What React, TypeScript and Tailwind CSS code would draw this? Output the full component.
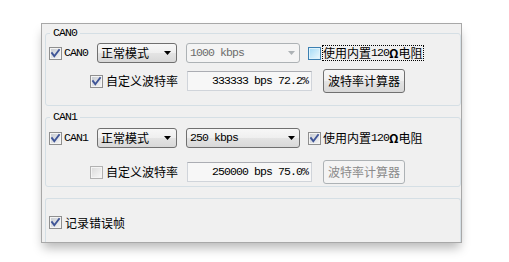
import React from 'react';

const zh = "font-['Noto_Sans_CJK_SC',sans-serif] text-[12px] leading-[14px]";
const mono = "font-['Liberation_Mono',monospace] text-[11.5px] leading-[14px] tracking-[-0.9px]";
const legendCls = "font-['Liberation_Mono',monospace] text-[11.5px] leading-[12px] tracking-[-0.9px] text-black";

type BoxVariant = 'normal' | 'hot' | 'disabled';

const boxColors: Record<BoxVariant, { edge: string; frame: string; from: string; to: string }> = {
    normal: { edge: '#8f8f8f', frame: '#f4f4f4', from: '#c9cdd3', to: '#f3f3f3' },
    hot: { edge: '#3c7fb1', frame: '#dff3fc', from: '#a9dcf6', to: '#e8f7fd' },
    disabled: { edge: '#b1b1b1', frame: '#f4f4f4', from: '#dcdcdc', to: '#f6f6f6' },
};

const CheckBox: React.FC<{ checked?: boolean; variant?: BoxVariant }> = ({ checked = false, variant = 'normal' }) => {
    const c = boxColors[variant];
    const gid = `cb-${variant}`;
    return (
        <svg width="13" height="13" viewBox="0 0 13 13" className="shrink-0">
            <defs>
                <linearGradient id={gid} x1="0" y1="0" x2="1" y2="1">
                    <stop offset="0" stopColor={c.from} />
                    <stop offset="1" stopColor={c.to} />
                </linearGradient>
            </defs>
            <rect x="0.5" y="0.5" width="12" height="12" fill={c.frame} stroke={c.edge} shapeRendering="crispEdges" />
            <rect x="2" y="2" width="9" height="9" fill={`url(#${gid})`} shapeRendering="crispEdges" />
            {checked && (
                <path d="M3 6.2 L5.3 9.2 L10 3" fill="none" stroke="#3f5597" strokeWidth={1.9} strokeLinecap="square" />
            )}
        </svg>
    );
};

const Arrow: React.FC<{ color: string }> = ({ color }) => (
    <svg width="7" height="4" viewBox="0 0 7 4" className="shrink-0">
        <path d="M0 0 H7 L3.5 4 Z" fill={color} />
    </svg>
);

const ModeCombo: React.FC = () => (
    <div className="flex h-[20px] w-[80px] shrink-0 items-center justify-between rounded-[3px] border border-[#707070] bg-[linear-gradient(to_bottom,#f7f7f7_0%,#efefef_50%,#e4e4e4_50%,#d8d8d8_100%)] pl-[3px] pr-[5px] text-black">
        <span className={zh}>正常模式</span>
        <Arrow color="#000" />
    </div>
);

const SpeedCombo: React.FC<{ value: string; disabled?: boolean }> = ({ value, disabled }) => (
    <div
        className={`ml-[9px] flex h-[20px] w-[114px] shrink-0 items-center justify-between rounded-[3px] border pl-[3px] pr-[4px] ${
            disabled
                ? 'border-[#adb2b5] bg-[#f4f4f4] text-[#6d6d6d]'
                : 'border-[#707070] bg-[linear-gradient(to_bottom,#f7f7f7_0%,#efefef_50%,#e4e4e4_50%,#d8d8d8_100%)] text-black'
        }`}
    >
        <span className={mono}>{value}</span>
        <Arrow color={disabled ? '#adb2b5' : '#000'} />
    </div>
);

interface CanConfig {
    name: string;
    speed: string;
    speedDisabled: boolean;
    resistorChecked: boolean;
    resistorFocused: boolean;
    custom: boolean;
    rate: string;
}

const channels: CanConfig[] = [
    { name: 'CAN0', speed: '1000 kbps', speedDisabled: true, resistorChecked: false, resistorFocused: true, custom: true, rate: '333333 bps 72.2%' },
    { name: 'CAN1', speed: '250 kbps', speedDisabled: false, resistorChecked: true, resistorFocused: false, custom: false, rate: '250000 bps 75.0%' },
];

const CanGroup: React.FC<{ cfg: CanConfig; first: boolean }> = ({ cfg, first }) => (
    <fieldset
        className={`ml-[3px] w-[416px] rounded-[3px] border border-[#d5dfe5] ${first ? 'mt-[3px] pb-[12px]' : 'mt-[5px] pb-[2px]'}`}
    >
        <legend className={`ml-[4px] px-[3px] ${legendCls}`}>{cfg.name}</legend>

        <div className={`flex h-[20px] items-center pl-[3px] ${first ? 'mt-[4px]' : 'mt-[5px]'}`}>
            <CheckBox checked />
            <span className={`ml-[2px] w-[33px] text-black ${mono}`}>{cfg.name}</span>
            <ModeCombo />
            <SpeedCombo value={cfg.speed} disabled={cfg.speedDisabled} />
            <div className="ml-[8px]">
                <CheckBox checked={cfg.resistorChecked} variant={cfg.resistorFocused ? 'hot' : 'normal'} />
            </div>
            <span
                className={`ml-[1px] flex items-center border border-dotted text-black ${
                    cfg.resistorFocused ? 'border-black' : 'border-transparent'
                }`}
            >
                <span className={zh}>使用内置</span>
                <span className={mono}>120</span>
                <span className={`${zh} font-bold`}>Ω</span>
                <span className={zh}>电阻</span>
            </span>
        </div>

        <div className={`flex h-[24px] items-center pl-[44px] ${first ? 'mt-[6px]' : 'mt-[12px]'}`}>
            <CheckBox checked={cfg.custom} variant={cfg.custom ? 'normal' : 'disabled'} />
            <span className={`ml-[3px] w-[81px] text-black ${zh}`}>自定义波特率</span>
            <div className="flex h-[20px] w-[125px] shrink-0 items-center justify-end border border-[#d0d4da] border-t-[#abadb3] bg-[#f7f7f7] pr-[3px]">
                <span className={`text-black ${mono}`}>{cfg.rate}</span>
            </div>
            <button
                type="button"
                className={`ml-[11px] flex h-[24px] w-[82px] shrink-0 items-center justify-center rounded-[3px] border ${
                    cfg.custom
                        ? 'border-[#707070] bg-[linear-gradient(to_bottom,#f7f7f7_0%,#efefef_50%,#e4e4e4_50%,#d8d8d8_100%)] text-black'
                        : 'border-[#adb2b5] bg-[#f4f4f4] text-[#8a8a8a]'
                }`}
            >
                <span className={zh}>波特率计算器</span>
            </button>
        </div>
    </fieldset>
);

export default function App() {
    return (
        <div className="h-[262px] w-[509px] overflow-hidden bg-white pl-[41px] pt-[23px]">
            <div className="h-[220px] w-[421px] overflow-hidden border border-[#a8a8a8] bg-[#f0f0f0] shadow-[0_7px_10px_-2px_rgba(0,0,0,0.28)]">
                {channels.map((cfg, i) => (
                    <CanGroup key={cfg.name} cfg={cfg} first={i === 0} />
                ))}

                <div className="ml-[3px] mt-[11px] h-[60px] w-[416px] rounded-t-[3px] border border-b-0 border-[#d5dfe5] pl-[3px] pt-[17px]">
                    <div className="flex h-[13px] items-center">
                        <CheckBox checked />
                        <span className={`ml-[3px] text-black ${zh}`}>记录错误帧</span>
                    </div>
                </div>
            </div>
        </div>
    );
}
